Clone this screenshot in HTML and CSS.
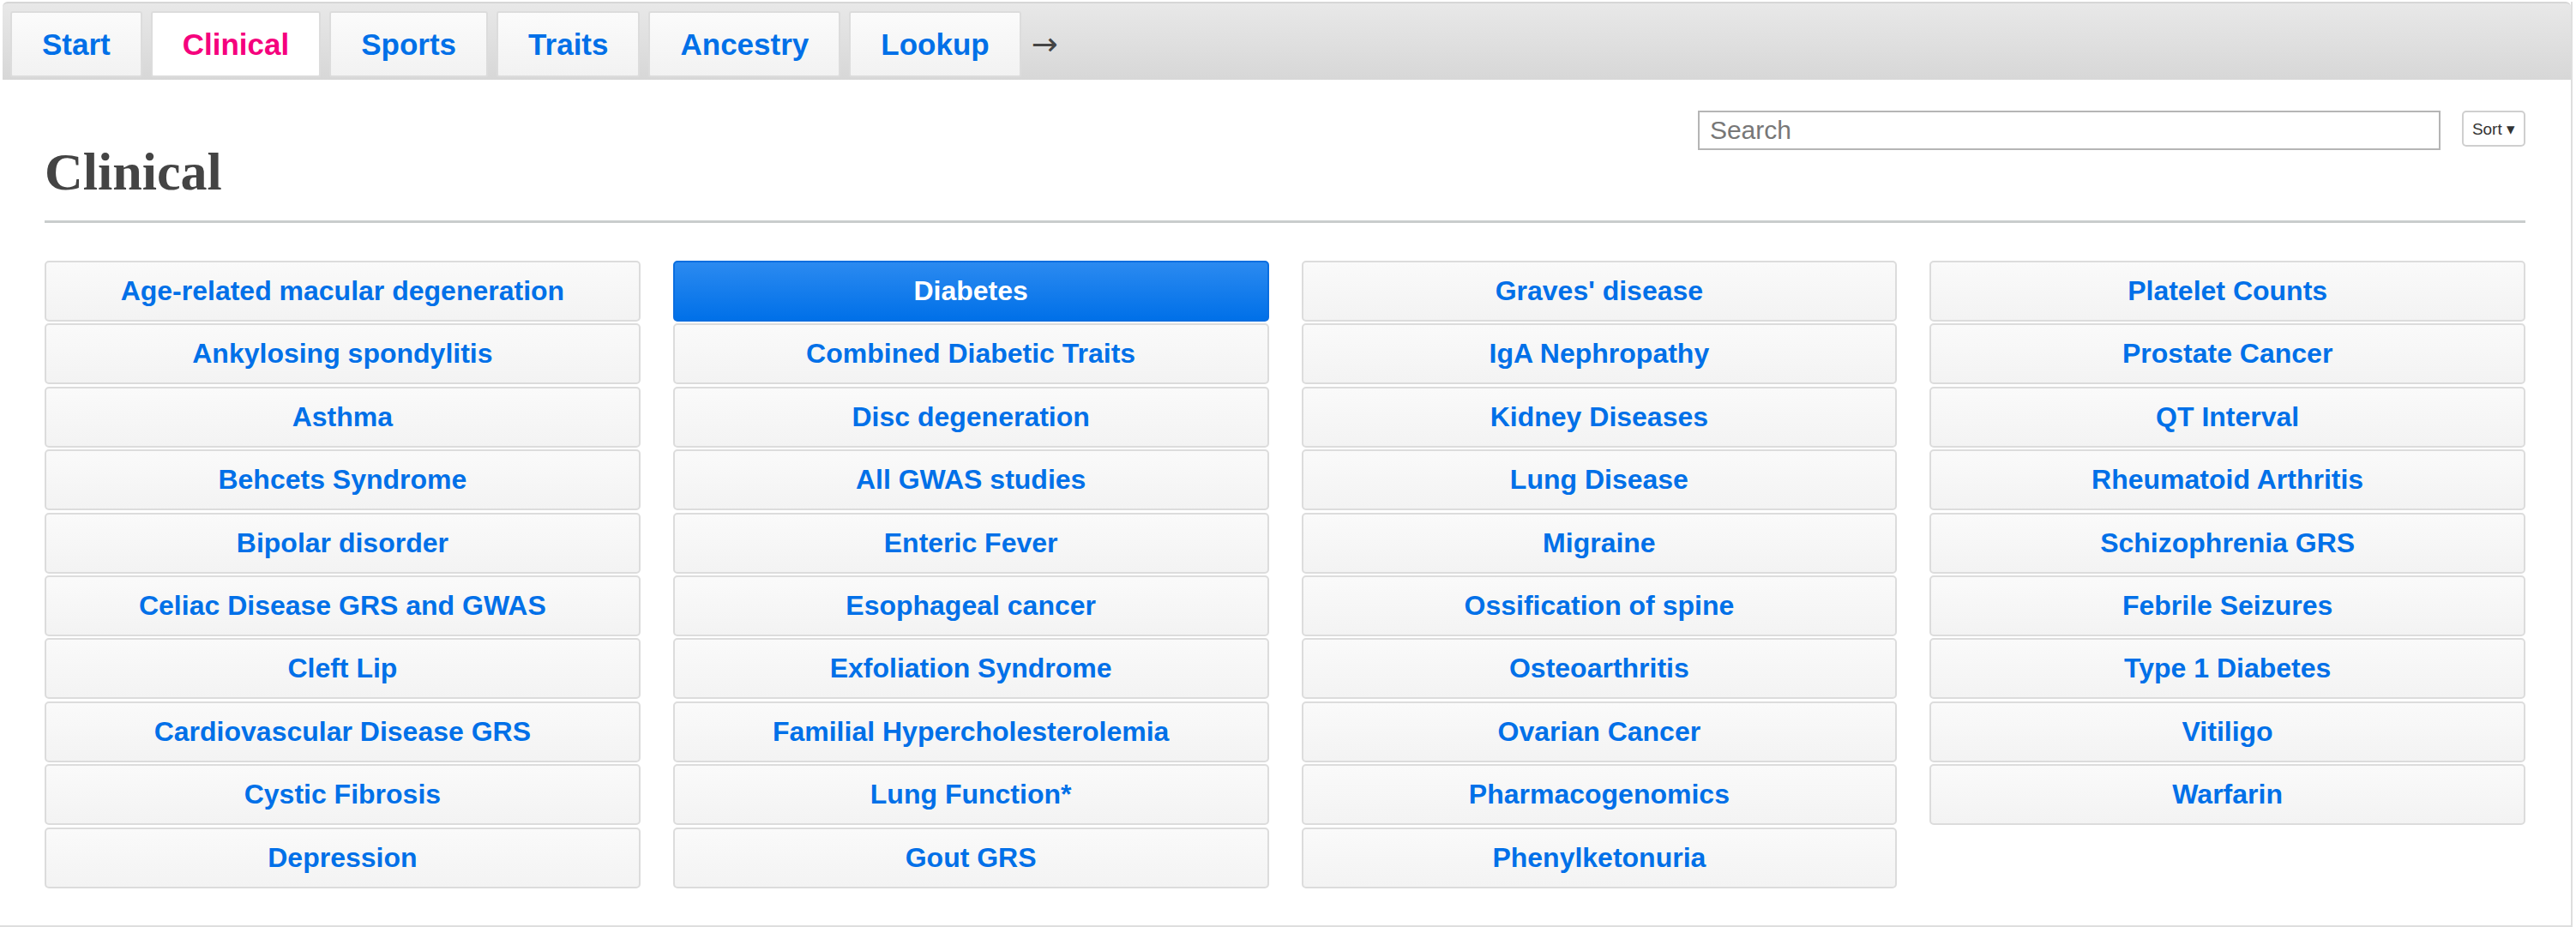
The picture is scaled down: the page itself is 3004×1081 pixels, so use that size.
FILE: index.html
```html
<!DOCTYPE html>
<html lang="en">
<head>
  <meta charset="UTF-8">
  <title>Clinical</title>
  <link rel="stylesheet" href="styles.css">
</head>
<body>

<div class="page">

  <!-- top navigation -->
  <div class="tabbar">
    <a class="tab" href="#">Start</a>
    <a class="tab active" href="#">Clinical</a>
    <a class="tab" href="#">Sports</a>
    <a class="tab" href="#">Traits</a>
    <a class="tab" href="#">Ancestry</a>
    <a class="tab" href="#">Lookup</a>
    <span class="next">&rarr;</span>
  </div>

  <div class="content">

    <div class="header">
      <h1>Clinical</h1>
      <div class="tools">
        <input type="text" class="search" placeholder="Search">
        <button class="sort">Sort &#9662;</button>
      </div>
    </div>

    <hr>

    <div class="grid">
      <div class="col">
        <a class="item" href="#">Age-related macular degeneration</a>
        <a class="item" href="#">Ankylosing spondylitis</a>
        <a class="item" href="#">Asthma</a>
        <a class="item" href="#">Behcets Syndrome</a>
        <a class="item" href="#">Bipolar disorder</a>
        <a class="item" href="#">Celiac Disease GRS and GWAS</a>
        <a class="item" href="#">Cleft Lip</a>
        <a class="item" href="#">Cardiovascular Disease GRS</a>
        <a class="item" href="#">Cystic Fibrosis</a>
        <a class="item" href="#">Depression</a>
      </div>
      <div class="col">
        <a class="item selected" href="#">Diabetes</a>
        <a class="item" href="#">Combined Diabetic Traits</a>
        <a class="item" href="#">Disc degeneration</a>
        <a class="item" href="#">All GWAS studies</a>
        <a class="item" href="#">Enteric Fever</a>
        <a class="item" href="#">Esophageal cancer</a>
        <a class="item" href="#">Exfoliation Syndrome</a>
        <a class="item" href="#">Familial Hypercholesterolemia</a>
        <a class="item" href="#">Lung Function*</a>
        <a class="item" href="#">Gout GRS</a>
      </div>
      <div class="col">
        <a class="item" href="#">Graves' disease</a>
        <a class="item" href="#">IgA Nephropathy</a>
        <a class="item" href="#">Kidney Diseases</a>
        <a class="item" href="#">Lung Disease</a>
        <a class="item" href="#">Migraine</a>
        <a class="item" href="#">Ossification of spine</a>
        <a class="item" href="#">Osteoarthritis</a>
        <a class="item" href="#">Ovarian Cancer</a>
        <a class="item" href="#">Pharmacogenomics</a>
        <a class="item" href="#">Phenylketonuria</a>
      </div>
      <div class="col">
        <a class="item" href="#">Platelet Counts</a>
        <a class="item" href="#">Prostate Cancer</a>
        <a class="item" href="#">QT Interval</a>
        <a class="item" href="#">Rheumatoid Arthritis</a>
        <a class="item" href="#">Schizophrenia GRS</a>
        <a class="item" href="#">Febrile Seizures</a>
        <a class="item" href="#">Type 1 Diabetes</a>
        <a class="item" href="#">Vitiligo</a>
        <a class="item" href="#">Warfarin</a>
      </div>
    </div>

  </div>
</div>

</body>
</html>
```

FILE: styles.css
```css
body { margin: 0; font-family: "Liberation Sans", Arial, sans-serif; background: #fff; }

.page { margin: 0 4px 0 0; border: 2px solid #dedede; border-left: 0; border-top: 0; }

/* nav */
.tabbar { display: flex; align-items: center; gap: 10px; margin: 2px 0 0 3px; padding: 9px 9px 3px; border-top: 2px solid #d6d6d6; border-radius: 6px 6px 0 0; background: linear-gradient(#e8e8e8, #d7d7d7); }
.tab { display: block; padding: 0 35px; height: 73px; line-height: 73px; font-size: 35px; font-weight: bold; color: #0070e8; text-decoration: none; border: 2px solid #dcdcdc; border-radius: 3px; background: linear-gradient(#fbfbfb, #f2f2f2); }
.tab.active { color: #f5007d; background: #fff; }
.next { font-family: "DejaVu Sans", sans-serif; font-size: 37px; color: #444; margin-left: 2px; }

.content { padding: 0 53px 41px 52px; }

.header { display: flex; justify-content: space-between; align-items: flex-start; margin-top: 36px; }
h1 { margin: 40px 0 0; font-family: "Liberation Serif", "Times New Roman", serif; font-size: 62px; line-height: 62px; color: #444; }
.tools { display: flex; align-items: flex-start; gap: 25px; }
.search { width: 866px; height: 46px; box-sizing: border-box; padding: 0 12px; font-family: "Liberation Sans", Arial, sans-serif; font-size: 30px; border: 2px solid #b5b5b5; border-radius: 0; }
.search::placeholder { color: #777; }
.sort { height: 42px; padding: 0 10px; font-family: "Liberation Sans", Arial, sans-serif; font-size: 19px; color: #333; background: #fff; border: 2px solid #cfcfcf; border-radius: 5px; }

hr { margin: 26px 0 44px; border: 0; border-top: 3px solid #c9cdcd; }

/* list of studies */
.grid { display: grid; grid-template-columns: repeat(4, 1fr); column-gap: 38px; }
.col { display: flex; flex-direction: column; }
.item { display: block; height: 67px; line-height: 67px; margin-bottom: 2.4px; text-align: center; font-size: 32px; font-weight: bold; color: #0070e8; text-decoration: none; border: 2px solid #dcdcdc; border-radius: 5px; background: linear-gradient(#fafafa, #f3f3f3); }
.item.selected { color: #fff; border-color: #0a6ee0; background: linear-gradient(#2b8af0, #0070e8); }
```
